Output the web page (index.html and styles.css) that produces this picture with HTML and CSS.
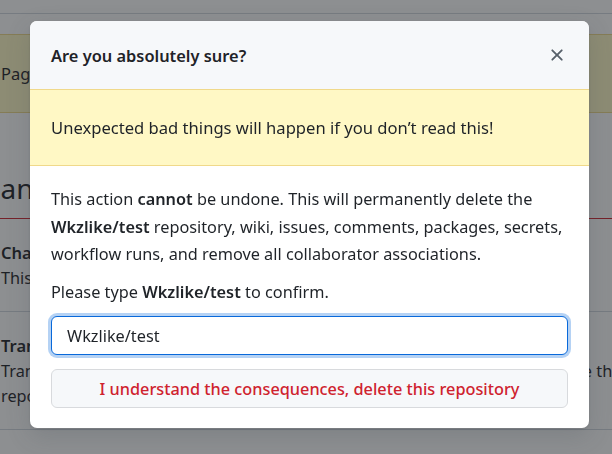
FILE: index.html
```html
<!DOCTYPE html>
<html lang="en">
<head>
<meta charset="utf-8">
<title>Delete repository</title>
<link rel="stylesheet" href="styles.css">
</head>
<body>
<div class="page">
  <div class="topbar"></div>
  <div class="page-flash">Pages is currently disabled for this repository.</div>
  <h2 class="danger-heading">Danger Zone</h2>
  <div class="danger-box">
    <div class="danger-row">
      <div class="row-title">Change repository visibility</div>
      <div class="row-desc">This repository is currently public.</div>
    </div>
    <div class="danger-row">
      <div class="row-title">Transfer ownership</div>
      <div class="row-desc nowrap">Transfer this repository to another user or to an organization where you have the ability to create<br>repositories.</div>
    </div>
    <div class="danger-row">
      <div class="row-title">Archive this repository</div>
    </div>
  </div>
</div>

<div class="overlay"></div>

<div class="modal" role="dialog" aria-labelledby="modal-title">
  <div class="modal-header">
    <h3 class="modal-title" id="modal-title">Are you absolutely sure?</h3>
    <button class="modal-close" aria-label="Close">
      <svg viewBox="0 0 16 16" width="20" height="20" aria-hidden="true"><path fill="currentColor" d="M3.72 3.72a.75.75 0 0 1 1.06 0L8 6.94l3.22-3.22a.749.749 0 0 1 1.275.326.749.749 0 0 1-.215.734L9.06 8l3.22 3.22a.749.749 0 0 1-.326 1.275.749.749 0 0 1-.734-.215L8 9.060l-3.22 3.22a.751.751 0 0 1-1.042-.018.751.751 0 0 1-.018-1.042L6.94 8 3.720 4.78a.75.75 0 0 1 0-1.06Z"/></svg>
    </button>
  </div>
  <div class="modal-flash">Unexpected bad things will happen if you don’t read this!</div>
  <div class="modal-body">
    <p class="modal-text">This action <strong>cannot</strong> be undone. This will permanently delete the <strong>Wkzlike/test</strong> repository, wiki, issues, comments, packages, secrets, workflow runs, and remove all collaborator associations.</p>
    <p class="modal-text">Please type <strong>Wkzlike/test</strong> to confirm.</p>
    <input class="confirm-input" type="text" value="Wkzlike/test" aria-label="Repository name">
    <button class="danger-button">I understand the consequences, delete this repository</button>
  </div>
</div>
</body>
</html>
```
FILE: styles.css
```css
html, body {
  margin: 0;
  padding: 0;
}
body {
  width: 612px;
  height: 454px;
  overflow: hidden;
  background: #ffffff;
  font-family: "Noto Sans", "Open Sans", sans-serif;
  font-size: 16.5px;
  color: #1f2328;
}
.page {
  margin-left: -20px;
  width: 1000px;
}
.topbar {
  height: 13px;
  border-bottom: 1px solid #d0d7de;
}
.page-flash {
  margin-top: 20px;
  height: 77px;
  display: flex;
  align-items: center;
  padding: 0 20px;
  background: #fff8c5;
  border: 1px solid rgba(212, 167, 44, 0.4);
  line-height: 27px;
}
.danger-heading {
  margin: 55px 0 10px;
  font-size: 28px;
  font-weight: 400;
  line-height: 40px;
}
.danger-box {
  border: 1px solid #cf222e;
  border-bottom: none;
}
.danger-row {
  padding: 20px;
}
.danger-row + .danger-row {
  border-top: 1px solid #d0d7de;
}
.row-title {
  font-weight: 600;
  line-height: 27px;
}
.row-desc {
  font-size: 16.3px;
  line-height: 25px;
}
.nowrap {
  white-space: nowrap;
}
.overlay {
  position: fixed;
  inset: 0;
  background: rgba(27, 31, 36, 0.5);
}
.modal {
  position: absolute;
  left: 30px;
  top: 21px;
  width: 559px;
  background: #ffffff;
  border-radius: 7px;
  overflow: hidden;
  box-shadow: 0 8px 24px rgba(66, 74, 83, 0.2), 0 1px 3px rgba(31, 35, 40, 0.12);
}
.modal-header {
  height: 68px;
  box-sizing: border-box;
  display: flex;
  align-items: center;
  justify-content: space-between;
  padding: 0 22px 0 21px;
  background: #f6f8fa;
}
.modal-title {
  margin: 0;
  font-size: 16.4px;
  font-weight: 600;
  line-height: 27px;
}
.modal-close {
  display: flex;
  padding: 0;
  border: 0;
  background: transparent;
  color: #57606a;
}
.modal-flash {
  padding: 24px 21px;
  line-height: 27px;
  font-size: 16.6px;
  background: #fff8c5;
  border-top: 1px solid #f0d98a;
  border-bottom: 1px solid #f0d98a;
}
.modal-body {
  display: flex;
  flex-direction: column;
  padding: 20px 21px 20px;
  font-size: 16.3px;
}
.modal-text {
  margin: 0 0 10px;
  line-height: 27.5px;
}
.modal-text strong {
  font-weight: 600;
}
.confirm-input {
  height: 39px;
  box-sizing: border-box;
  margin: 0;
  padding: 0 15px;
  border: 1px solid #0969da;
  border-radius: 6px;
  box-shadow: 0 0 0 3px rgba(9, 105, 218, 0.3);
  font-family: inherit;
  font-size: 16.3px;
  color: #1f2328;
  outline: none;
}
.danger-button {
  margin-top: 14px;
  height: 39px;
  box-sizing: border-box;
  border: 1px solid #d8dadd;
  border-radius: 6px;
  background: #f6f8fa;
  color: #cf222e;
  font-family: inherit;
  font-size: 16.3px;
  font-weight: 500;
}
```
